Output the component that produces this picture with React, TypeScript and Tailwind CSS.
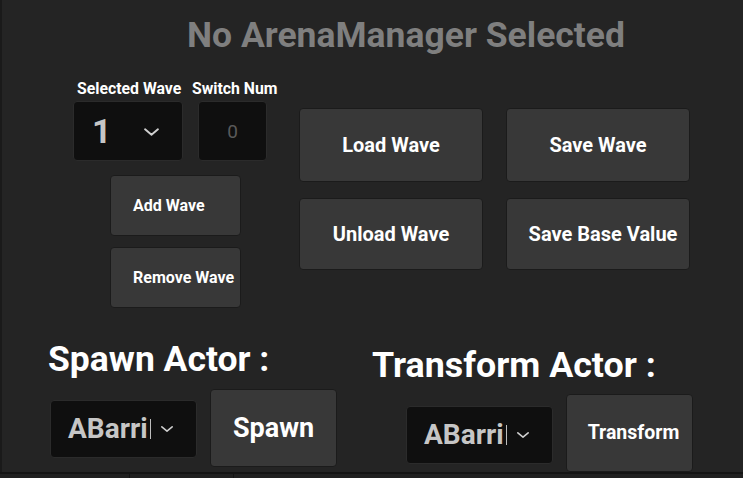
import React from "react";

const Chevron = ({ w, h, className }: { w: number; h: number; className?: string }) => (
  <svg width={w} height={h} viewBox="0 0 14 7" className={className} fill="none">
    <path d="M1 1 L7 6 L13 1" stroke="#d0d0d0" strokeWidth="1.8" strokeLinecap="round" strokeLinejoin="round" />
  </svg>
);

const Btn = ({ children, className }: { children: React.ReactNode; className: string }) => (
  <div className={`flex items-center rounded-[4px] border border-[#1b1b1b] bg-[#383838] font-bold text-white ${className}`}>
    {children}
  </div>
);

const ActorCombo = ({ className }: { className: string }) => (
  <div className={`flex h-[58px] w-[147px] items-center rounded-[4px] border border-[#2b2b2b] bg-[#0f0f0f] ${className}`}>
    <div className="ml-[17px] flex w-[83px] items-center whitespace-nowrap text-[28px] font-bold leading-none text-[#c6c6c6]">
      <span>ABarri</span>
      <span className="ml-[2px] h-[20px] w-[1px] bg-[#bdbdbd]" />
    </div>
    <Chevron w={12} h={6} className="ml-[10px]" />
  </div>
);

export default function App() {
  return (
    <div
      className="flex h-[478px] w-[743px] flex-col overflow-hidden bg-[#181818]"
      style={{ fontFamily: "Roboto, 'Noto Sans', sans-serif" }}
    >
      <div className="flex h-[472px] flex-col border-l-2 border-[#1a1a1a] bg-[#242424]">
        {/* Title */}
        <div className="pl-[185px] pt-[13px] text-[35.5px] font-bold leading-[44px] text-[#7f7f7f]">
          No ArenaManager Selected
        </div>

        {/* Middle */}
        <div className="mt-[22px] flex">
          <div className="ml-[71px] flex w-[194px] flex-col">
            <div className="mt-[1px] flex whitespace-nowrap text-[15.8px] font-bold leading-[18px] text-white">
              <div className="w-[119px] shrink-0 pl-[4px]">Selected Wave</div>
              <div className="shrink-0">Switch Num</div>
            </div>
            <div className="mt-[3px] flex gap-[15px]">
              <div className="flex h-[60px] w-[110px] items-center rounded-[4px] border border-[#2b2b2b] bg-[#0f0f0f]">
                <span className="ml-[18px] text-[34px] font-bold leading-none text-[#c6c6c6]">1</span>
                <Chevron w={15} h={8} className="ml-[32px] mt-[2px]" />
              </div>
              <div className="flex h-[60px] w-[69px] items-center justify-center rounded-[4px] border border-[#2b2b2b] bg-[#0f0f0f] text-[19px] leading-none text-[#5a5a5a]">
                0
              </div>
            </div>
            <div className="ml-[37px] mt-[14px] flex flex-col gap-[11px]">
              <Btn className="h-[61px] w-[131px] pl-[22px] text-[16px]">Add Wave</Btn>
              <Btn className="h-[61px] w-[131px] pl-[22px] text-[16px]">Remove Wave</Btn>
            </div>
          </div>

          <div className="ml-[32px] mt-[29px] grid grid-cols-[184px_184px] grid-rows-[74px_72px] gap-x-[23px] gap-y-[16px] text-[20px]">
            <Btn className="justify-center">Load Wave</Btn>
            <Btn className="justify-center">Save Wave</Btn>
            <Btn className="justify-center">Unload Wave</Btn>
            <Btn className="justify-center pl-[10px]">Save Base Value</Btn>
          </div>
        </div>

        {/* Bottom */}
        <div className="mt-[31px] flex">
          <div className="ml-[46px] flex flex-col">
            <div className="text-[35.5px] font-bold leading-[40px] text-white">Spawn Actor :</div>
            <div className="mt-[10px] flex items-start">
              <ActorCombo className="ml-[2px] mt-[11px]" />
              <Btn className="ml-[13px] h-[78px] w-[127px] justify-center text-[27px]">Spawn</Btn>
            </div>
          </div>

          <div className="ml-[35px] flex flex-col">
            <div className="mt-[6px] text-[35.8px] font-bold leading-[40px] text-white">Transform Actor :</div>
            <div className="mt-[9px] flex items-start">
              <ActorCombo className="ml-[34px] mt-[12px]" />
              <Btn className="ml-[13px] h-[78px] w-[127px] justify-center pl-[8px] text-[19.5px]">Transform</Btn>
            </div>
          </div>
        </div>
      </div>
      <div className="flex h-[6px] border-t-2 border-[#141414] bg-[#202020]">
        <div className="w-[130px] border-r border-[#141414]" />
        <div className="w-[104px] border-r border-[#141414]" />
      </div>
    </div>
  );
}
